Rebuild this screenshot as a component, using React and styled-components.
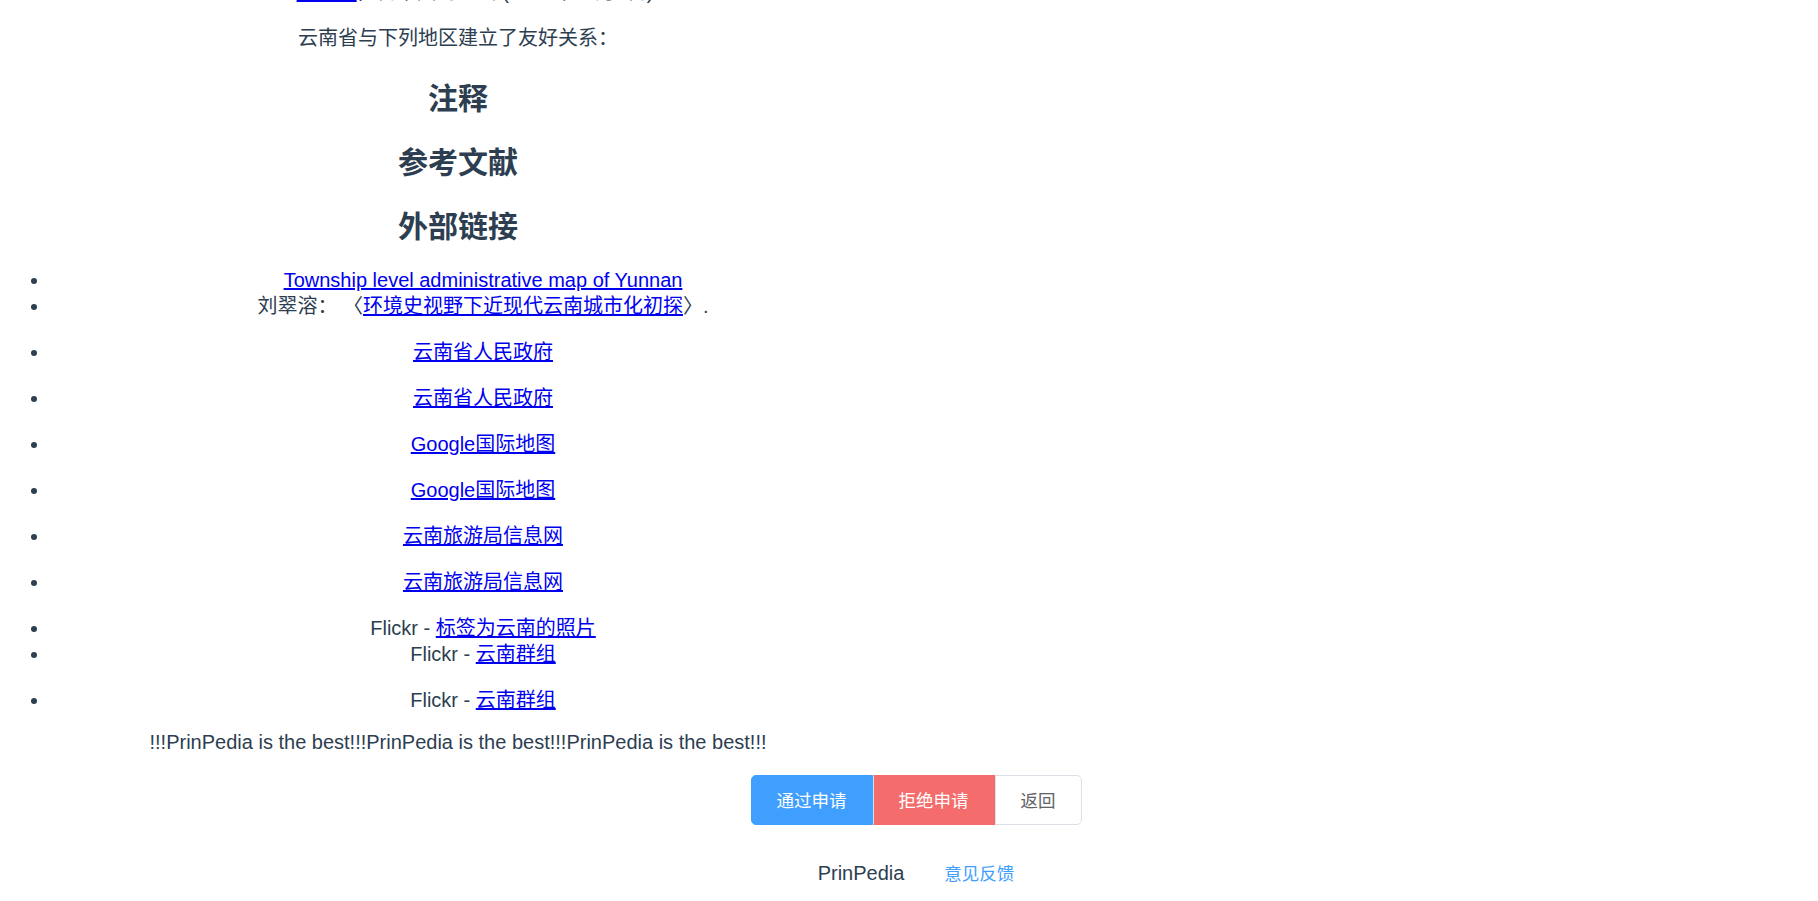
import React from 'react';
import styled, { createGlobalStyle } from 'styled-components';

const GlobalStyle = createGlobalStyle`
  html, body {
    margin: 0;
    padding: 0;
    overflow: hidden;
    background: #fff;
  }
  body {
    font-family: "Liberation Sans", Arial, "Noto Sans CJK SC", sans-serif;
    font-size: 20px;
    color: #2c3e50;
    text-align: center;
    -webkit-font-smoothing: antialiased;
  }
`;

const Page = styled.div`
  display: flex;
  flex-direction: column;
`;

const Article = styled.div`
  width: 916px;
`;

const Para = styled.p`
  margin: 20px 0;
  line-height: 26px;
  padding-left: ${p => p.$indent || 0}px;
  &:first-child {
    margin-top: -21px;
  }
`;

const Heading = styled.h2`
  margin: 24px 0;
  padding-top: 8px;
  font-size: 30px;
  line-height: 32px;
  font-weight: bold;
`;

const LinkList = styled.ul`
  margin: 0 0 20px;
  padding-left: 50px;
  line-height: 26px;
  list-style: disc;
`;

const Item = styled.li``;

const ItemPara = styled.p`
  margin: 20px 0;
`;

const Link = styled.a`
  color: #0000ee;
  text-decoration: underline;
  cursor: pointer;
`;

const Slogan = styled.p`
  margin: -4px 0 20px;
  line-height: 26px;
`;

const ButtonBar = styled.div`
  display: flex;
  justify-content: center;
  padding-left: 14px;
`;

const ButtonGroup = styled.div`
  display: inline-flex;
`;

const palette = {
  primary: { bg: '#409eff', border: '#409eff', color: '#fff' },
  danger: { bg: '#f56c6c', border: '#f56c6c', color: '#fff' },
  plain: { bg: '#fff', border: '#dcdfe6', color: '#606266' },
};

const Button = styled.button`
  font-family: "Noto Sans CJK SC", "Liberation Sans", sans-serif;
  font-size: 17.5px;
  line-height: 1;
  padding: 15px 25px;
  margin: 0;
  background: ${p => palette[p.$variant].bg};
  color: ${p => palette[p.$variant].color};
  border: 1px solid ${p => palette[p.$variant].border};
  border-radius: 0;
  cursor: pointer;
  &:first-child {
    border-radius: 5px 0 0 5px;
  }
  &:last-child {
    border-radius: 0 5px 5px 0;
  }
  & + & {
    border-left-color: ${p => (p.$variant === 'plain' ? palette.plain.border : 'rgba(255,255,255,0.5)')};
  }
`;

const Footer = styled.div`
  display: flex;
  justify-content: center;
  align-items: baseline;
  gap: 40px;
  padding-left: 14px;
  margin-top: 35px;
  line-height: 26px;
`;

const Brand = styled.span`
  font-size: 20px;
`;

const Feedback = styled.a`
  font-family: "Noto Sans CJK SC", "Liberation Sans", sans-serif;
  font-size: 17.5px;
  color: #409eff;
  text-decoration: none;
  cursor: pointer;
`;

const links = [
  { kind: 'p', text: '云南省人民政府' },
  { kind: 'p', text: '云南省人民政府' },
  { kind: 'p', text: 'Google国际地图' },
  { kind: 'p', text: 'Google国际地图' },
  { kind: 'p', text: '云南旅游局信息网' },
  { kind: 'p', text: '云南旅游局信息网' },
  { kind: 'line', prefix: 'Flickr - ', text: '标签为云南的照片' },
  { kind: 'line', prefix: 'Flickr - ', text: '云南群组' },
  { kind: 'p', prefix: 'Flickr - ', text: '云南群组' },
];

export default function App() {
  return (
    <Page>
      <GlobalStyle />
      <Article>
        <Para $indent={34}>
          <Link>埼玉县</Link>，日本国埼玉县 (1987年10月6日)
        </Para>
        <Para>云南省与下列地区建立了友好关系：</Para>
        <Heading>注释</Heading>
        <Heading>参考文献</Heading>
        <Heading>外部链接</Heading>
        <LinkList>
          <Item>
            <Link>Township level administrative map of Yunnan</Link>
          </Item>
          <Item>
            刘翠溶：{'\u00a0'}〈<Link>环境史视野下近现代云南城市化初探</Link>〉.
          </Item>
          {links.map((l, i) =>
            l.kind === 'p' ? (
              <Item key={i}>
                <ItemPara>
                  {l.prefix}
                  <Link>{l.text}</Link>
                </ItemPara>
              </Item>
            ) : (
              <Item key={i}>
                {l.prefix}
                <Link>{l.text}</Link>
              </Item>
            )
          )}
        </LinkList>
        <Slogan>!!!PrinPedia is the best!!!PrinPedia is the best!!!PrinPedia is the best!!!</Slogan>
      </Article>
      <ButtonBar>
        <ButtonGroup>
          <Button $variant="primary">通过申请</Button>
          <Button $variant="danger">拒绝申请</Button>
          <Button $variant="plain">返回</Button>
        </ButtonGroup>
      </ButtonBar>
      <Footer>
        <Brand>PrinPedia</Brand>
        <Feedback>意见反馈</Feedback>
      </Footer>
    </Page>
  );
}
